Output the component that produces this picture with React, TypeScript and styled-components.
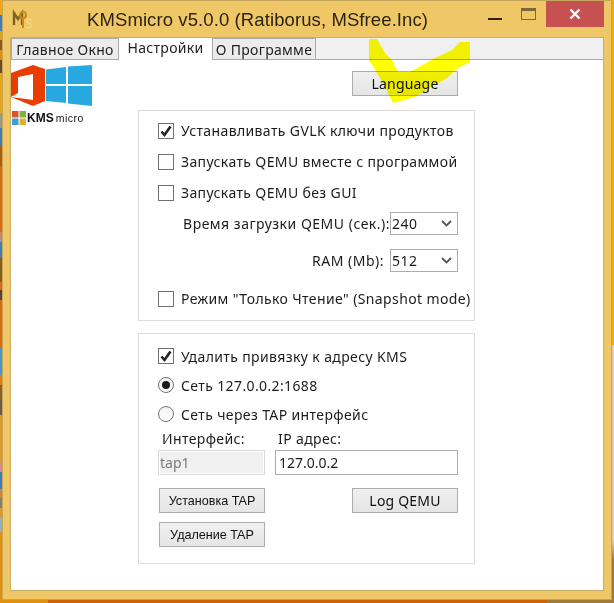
import React from "react";
import styled, { createGlobalStyle } from "styled-components";

const Global = createGlobalStyle`
  html, body { margin: 0; padding: 0; background: #e39006; }
  * { box-sizing: border-box; }
`;

const Desktop = styled.div`
  width: 614px;
  height: 603px;
  overflow: hidden;
  padding: 0 2px 3px 2px;
  background:
    linear-gradient(180deg,
      #f2a80e 0 15px, #3c7fb8 15px 31px, #e8a010 31px 40px, #8a5a18 40px 50px, #e39006 50px 60px,
      #6a4a20 60px 73px, #e8a614 73px 113px, #9a9a8a 113px 128px, #3c7fb8 128px 145px,
      #a85c10 145px 166px, #dc6a08 166px 232px, #c08878 232px 242px, #3c7fb8 242px 258px,
      #8a5a18 258px 282px, #dc6a08 282px 290px, #5a4030 290px 300px, #dc6a08 300px 348px,
      #4a94cc 348px 375px, #dc8008 375px 385px, #8a6020 385px 400px, #6a5a40 400px 415px,
      #dc9a20 415px 462px, #d88888 462px 472px, #3c7fb8 472px 489px, #c88a30 489px 498px,
      #808070 498px 508px, #dc9a20 508px 518px, #90b0c0 518px 532px, #e39006 532px 100%)
      left top / 2px 100% no-repeat,
    linear-gradient(180deg, #f0aa10 0 345px, #e0cfae 345px 540px, #a07a3c 560px 100%)
      right top / 2px 100% no-repeat,
    linear-gradient(90deg, #e39006 0 48px, #cf6204 48px 547px, #a07a3c 547px 100%);
  font-family: "Noto Sans", sans-serif;
  font-size: 14px;
  color: #1c1c1c;
`;

const Win = styled.div`
  height: 600px;
  display: flex;
  flex-direction: column;
  background: #f0c766;
  border: 1px solid #c4a65e;
  padding: 0 7px 8px 7px;
`;

const TitleBar = styled.div`
  height: 36px;
  flex: none;
  display: flex;
  align-items: flex-start;
`;

const AppIcon = styled.svg`
  width: 22px;
  height: 22px;
  margin: 8px 0 0 2px;
  flex: none;
`;

const Title = styled.div`
  margin: 7px 0 0 53px;
  font: 18.5px/24px "Liberation Sans", sans-serif;
  letter-spacing: 0.1px;
  color: #2a2414;
  white-space: nowrap;
`;

const Controls = styled.div`
  margin-left: auto;
  display: flex;
  align-items: flex-start;
`;

const MinBtn = styled.div`
  width: 14px;
  height: 2px;
  margin: 17px 19px 0 0;
  background: #2a2414;
`;

const MaxBtn = styled.div`
  width: 15px;
  height: 12px;
  margin: 7px 10px 0 0;
  border: 1px solid #7a6a3a;
  border-top-width: 3px;
`;

const CloseBtn = styled.div`
  width: 58px;
  height: 26px;
  background: #c75050;
  display: flex;
  align-items: center;
  justify-content: center;
`;

const Client = styled.div`
  flex: 1;
  min-height: 0;
  display: flex;
  flex-direction: column;
  background: #fff;
  border: 1px solid #c9ae6a;
`;

const TabStrip = styled.div`
  height: 22px;
  flex: none;
  display: flex;
  align-items: flex-start;
  background: #f0f0f0;
  border-bottom: 1px solid #a9a9a9;
`;

const Tab = styled.div<{ $active?: boolean; $w: number }>`
  width: ${(p) => p.$w}px;
  height: 22px;
  display: flex;
  align-items: center;
  justify-content: center;
  padding-bottom: ${(p) => (p.$active ? 3 : 0)}px;
  background: ${(p) => (p.$active ? "#fff" : "#ececec")};
  border: ${(p) => (p.$active ? "none" : "1px solid #a9a9a9")};
  font-size: 14px;
  letter-spacing: 0.3px;
  white-space: nowrap;
  color: #222;
`;

const Page = styled.div`
  flex: 1;
  display: flex;
  position: relative;
`;

const LogoColumn = styled.div`
  width: 127px;
  flex: none;
  padding-top: 5px;
`;

const LogoRow = styled.div`
  display: flex;
  align-items: center;
  font: 700 12px/14px "Liberation Sans", sans-serif;
  color: #111;
  margin: 4px 0 0 1px;
`;

const Micro = styled.span`
  font-weight: 400;
  font-size: 10.5px;
  letter-spacing: 0.5px;
  margin-left: 2px;
`;

const Main = styled.div`
  width: 337px;
  flex: none;
  padding-top: 11px;
  display: flex;
  flex-direction: column;
  gap: 12px;
`;

const LanguageRow = styled.div`
  display: flex;
  justify-content: flex-end;
  padding-right: 17px;
  margin-bottom: 2px;
`;

const Panel = styled.div<{ $h: number }>`
  height: ${(p) => p.$h}px;
  border: 1px solid #dcdcdc;
  padding: 4px 0 0 19px;
  display: flex;
  flex-direction: column;
`;

const Row = styled.div<{ $h?: number }>`
  height: ${(p) => p.$h ?? 31}px;
  display: flex;
  align-items: center;
  gap: 7px;
  white-space: nowrap;
  flex: none;
  letter-spacing: 0.38px;
`;

const Check = styled.span`
  width: 16px;
  height: 16px;
  flex: none;
  background: #fff;
  border: 1px solid #707070;
  display: flex;
  align-items: center;
  justify-content: center;
`;

const Radio = styled.span`
  width: 16px;
  height: 16px;
  flex: none;
  border: 1px solid #707070;
  border-radius: 50%;
  background: linear-gradient(#f2f2f2, #fff);
  display: flex;
  align-items: center;
  justify-content: center;
`;

const Dot = styled.span`
  width: 8px;
  height: 8px;
  border-radius: 50%;
  background: #1a1a1a;
`;

const SelectRow = styled.div<{ $h: number; $gap: number }>`
  height: ${(p) => p.$h}px;
  width: 300px;
  display: flex;
  align-items: center;
  justify-content: flex-end;
  gap: ${(p) => p.$gap}px;
  white-space: nowrap;
  flex: none;
  letter-spacing: 0.5px;
`;

const Select = styled.div`
  width: 68px;
  height: 23px;
  flex: none;
  border: 1px solid #acacac;
  background: #fff;
  display: flex;
  align-items: center;
  justify-content: space-between;
  padding: 0 5px 0 1px;
`;

const FieldLabels = styled.div`
  display: grid;
  grid-template-columns: 116px 1fr;
  padding: 0 0 4px 4px;
  height: 18px;
  line-height: 14px;
  flex: none;
  letter-spacing: 0.38px;
`;

const FieldRow = styled.div`
  display: grid;
  grid-template-columns: 107px 183px;
  gap: 10px;
  flex: none;
`;

const Field = styled.div<{ $disabled?: boolean }>`
  height: 25px;
  display: flex;
  align-items: center;
  padding-left: ${(p) => (p.$disabled ? 1 : 3)}px;
  border: 1px solid ${(p) => (p.$disabled ? "#d9d9d9" : "#acacac")};
  background: ${(p) => (p.$disabled ? "#f0f0f0" : "#fff")};
  color: ${(p) => (p.$disabled ? "#7a7a7a" : "#1c1c1c")};
  box-shadow: ${(p) => (p.$disabled ? "inset 0 0 0 1px #fff" : "none")};
`;

const Button = styled.div<{ $small?: boolean }>`
  width: 106px;
  height: 25px;
  display: flex;
  align-items: center;
  justify-content: center;
  border: 1px solid #acacac;
  background: linear-gradient(#f0f0f0, #e5e5e5);
  white-space: nowrap;
  font: ${(p) => (p.$small ? '12.6px "Liberation Sans", sans-serif' : 'inherit')};
  letter-spacing: ${(p) => (p.$small ? 0 : 0.2)}px;
  color: #111;
`;

const ButtonArea = styled.div`
  display: flex;
  justify-content: space-between;
  width: 299px;
  margin: 13px 0 0 1px;
`;

const ButtonStack = styled.div`
  display: flex;
  flex-direction: column;
  gap: 9px;
`;

const Scribble = styled.svg`
  position: absolute;
  left: 358px;
  top: -21px;
  width: 101px;
  height: 64px;
  pointer-events: none;
  mix-blend-mode: multiply;
`;

const Tick = () => (
  <svg width="14" height="14" viewBox="0 0 14 14">
    <path d="M2.5 7.5 L5.5 11 L11.5 2.5" fill="none" stroke="#222" strokeWidth="2.6" />
  </svg>
);

const Chevron = () => (
  <svg width="11" height="7" viewBox="0 0 11 7">
    <path d="M1 1 L5.5 5.5 L10 1" fill="none" stroke="#555" strokeWidth="1.8" />
  </svg>
);

export default function App() {
  return (
    <Desktop>
      <Global />
      <Win>
        <TitleBar>
          <AppIcon viewBox="0 0 22 22">
            <path d="M2 16 V4 L6 10 L10 4 V16" fill="none" stroke="#7d6320" strokeWidth="2.4" />
            <circle cx="11" cy="6" r="3" fill="none" stroke="#c98a1c" strokeWidth="2" />
            <path d="M11 9 V19" stroke="#c98a1c" strokeWidth="2" />
            <path d="M20 11 Q14 9 15 13 Q20 15 19 18 Q16 20 14 18" fill="none" stroke="#f6d680" strokeWidth="1.6" />
          </AppIcon>
          <Title>KMSmicro v5.0.0 (Ratiborus, MSfree.Inc)</Title>
          <Controls>
            <MinBtn />
            <MaxBtn />
            <CloseBtn>
              <svg width="12" height="12" viewBox="0 0 12 12">
                <path d="M1.5 1.5 L10.5 10.5 M10.5 1.5 L1.5 10.5" stroke="#fff" strokeWidth="2.4" />
              </svg>
            </CloseBtn>
          </Controls>
        </TitleBar>
        <Client>
          <TabStrip>
            <Tab $w={108}>Главное Окно</Tab>
            <Tab $w={93} $active>Настройки</Tab>
            <Tab $w={104}>О Программе</Tab>
          </TabStrip>
          <Page>
            <LogoColumn>
              <svg width="82" height="42" viewBox="0 0 82 42" style={{ display: "block" }}>
                <path d="M0 8 L22 0 L34 4 V36 L22 41 L0 32 L22 35 V9 L7 12 V28 L0 32 Z" fill="#eb3c00" />
                <path d="M35 4.5 L55 2 V19 H35 Z M57 1.5 L81 0 V19 H57 Z M35 21 H55 V38 L35 36 Z M57 21 H81 V41 L57 38.5 Z" fill="#28a8e0" />
              </svg>
              <LogoRow>
                <svg width="14" height="14" viewBox="0 0 14 14" style={{ marginRight: 1 }}>
                  <rect x="0" y="0" width="6.5" height="6.5" fill="#d9552b" />
                  <rect x="7.5" y="0" width="6.5" height="6.5" fill="#7cb342" />
                  <rect x="0" y="7.5" width="6.5" height="6.5" fill="#3f9fd0" />
                  <rect x="7.5" y="7.5" width="6.5" height="6.5" fill="#e0b030" />
                </svg>
                KMS<Micro>micro</Micro>
              </LogoRow>
            </LogoColumn>
            <Main>
              <LanguageRow><Button>Language</Button></LanguageRow>
              <Panel $h={211}>
                <Row><Check><Tick /></Check>Устанавливать GVLK ключи продуктов</Row>
                <Row><Check />Запускать QEMU вместе с программой</Row>
                <Row><Check />Запускать QEMU без GUI</Row>
                <SelectRow $h={30} $gap={0}>Время загрузки QEMU (сек.):<Select>240<Chevron /></Select></SelectRow>
                <SelectRow $h={44} $gap={6}>RAM (Mb):<Select>512<Chevron /></Select></SelectRow>
                <Row $h={33}><Check />Режим "Только Чтение" (Snapshot mode)</Row>
              </Panel>
              <Panel $h={231}>
                <Row $h={36}><Check><Tick /></Check>Удалить привязку к адресу KMS</Row>
                <Row $h={22}><Radio><Dot /></Radio>Сеть 127.0.0.2:1688</Row>
                <Row $h={36}><Radio />Сеть через TAP интерфейс</Row>
                <FieldLabels><span>Интерфейс:</span><span>IP адрес:</span></FieldLabels>
                <FieldRow>
                  <Field $disabled>tap1</Field>
                  <Field>127.0.0.2</Field>
                </FieldRow>
                <ButtonArea>
                  <ButtonStack>
                    <Button $small>Установка TAP</Button>
                    <Button $small>Удаление TAP</Button>
                  </ButtonStack>
                  <Button>Log QEMU</Button>
                </ButtonArea>
              </Panel>
            </Main>
            <Scribble viewBox="0 0 101 64">
              <path d="M0 0 L8 0 L16 14 L23 21 L29 33 L41 33 L66 19 L83 11 L91 3 L101 3 V23 L89 29 L78 39 L46 58 L24 64 L14 44 L0 21 Z" fill="#ffff00" />
            </Scribble>
          </Page>
        </Client>
      </Win>
    </Desktop>
  );
}
